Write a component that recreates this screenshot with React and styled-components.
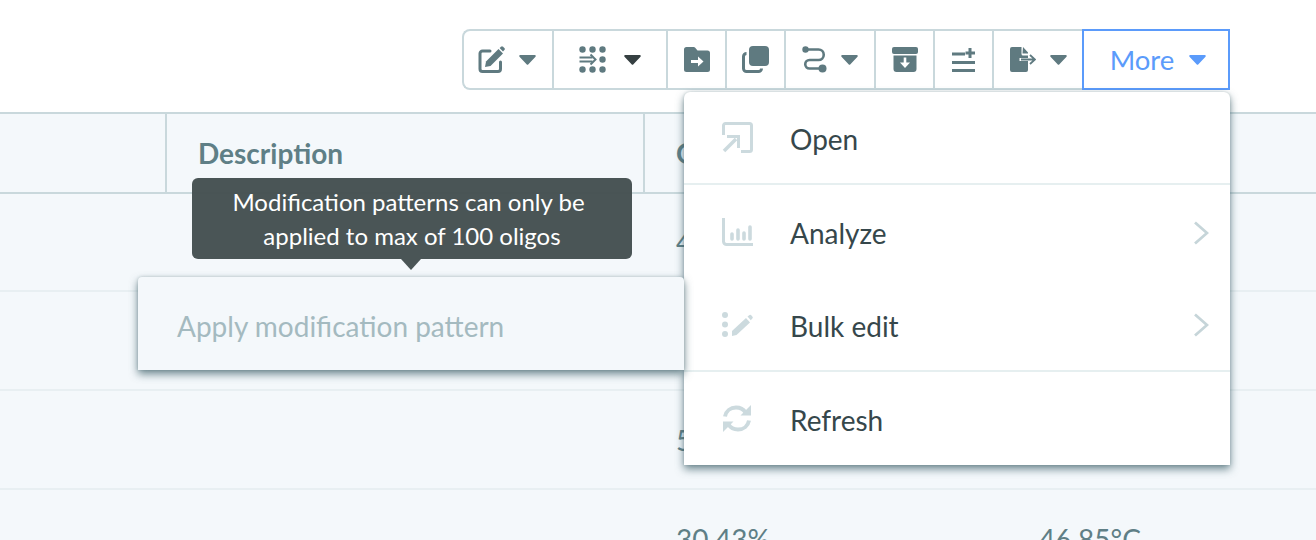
import React from "react";
import styled, { createGlobalStyle } from "styled-components";

const Global = createGlobalStyle`
  html, body { margin: 0; padding: 0; background: #f4f8fb; overflow: hidden; }
  body { font-family: Lato, "Noto Sans", sans-serif; }
  * { box-sizing: border-box; }
`;

const Page = styled.div`
  position: relative;
  width: 1316px;
  height: 540px;
  overflow: hidden;
  background: #f4f8fb;
`;

const TopBar = styled.div`
  height: 114px;
  background: #fff;
  border-bottom: 2px solid #c9d8dc;
  padding: 29px 86px 0 0;
  display: flex;
  justify-content: flex-end;
  align-items: flex-start;
`;

const Toolbar = styled.div`
  display: flex;
  height: 61px;
  border: 2px solid #c9d8dc;
  border-right: none;
  border-radius: 8px 0 0 8px;
`;

const ToolButton = styled.div`
  width: ${p => p.$w}px;
  display: flex;
  align-items: center;
  justify-content: center;
  gap: ${p => p.$gap ?? 14}px;
  border-right: 2px solid #c9d8dc;
  padding-right: ${p => p.$pr ?? 0}px;
`;

const MoreButton = styled.div`
  width: 148px;
  height: 61px;
  margin-left: -2px;
  padding-left: 4px;
  border: 2px solid #5b9bfb;
  color: #5b9bfb;
  font-size: 27.5px;
  line-height: 1;
  display: flex;
  align-items: center;
  justify-content: center;
  gap: 15px;
`;

const HeaderRow = styled.div`
  display: grid;
  grid-template-columns: 167px 478px 363px 1fr;
  height: 80px;
  border-bottom: 2px solid #c9d8dc;
`;

const HeaderCell = styled.div`
  border-right: ${p => (p.$divider ? "2px solid #c9d8dc" : "none")};
  padding-left: 31px;
  display: flex;
  align-items: center;
  font-size: 28px;
  font-weight: 700;
  color: #5f7f86;
`;

const Row = styled.div`
  display: grid;
  grid-template-columns: 167px 478px 363px 1fr;
  height: ${p => p.$h}px;
  border-bottom: 2px solid #e8eff2;
  align-items: center;
`;

const Cell = styled.div`
  padding-left: 31px;
  font-size: 28px;
  color: #5f7f86;
  white-space: nowrap;
`;

const Tooltip = styled.div`
  position: absolute;
  left: 192px;
  top: 178px;
  width: 440px;
  height: 81px;
  padding-top: 7px;
  background: rgba(68, 80, 81, 0.97);
  border-radius: 6px;
  color: #fff;
  font-size: 24px;
  line-height: 34px;
  text-align: center;
  z-index: 3;
  &::after {
    content: "";
    position: absolute;
    left: 209px;
    top: 81px;
    border-left: 10px solid transparent;
    border-right: 10px solid transparent;
    border-top: 11px solid rgba(68, 80, 81, 0.97);
  }
`;

const TipLine = styled.div`
  padding-right: ${p => p.$pr ?? 0}px;
`;

const ApplyMenu = styled.div`
  position: absolute;
  left: 138px;
  top: 277px;
  width: 546px;
  height: 93px;
  padding: 4px 0 0 39px;
  display: flex;
  align-items: center;
  background: #f4f8fb;
  border-radius: 4px 4px 0 0;
  box-shadow: 0 4px 8px rgba(62, 96, 105, 0.75), 0 0 3px rgba(62, 96, 105, 0.25);
  color: #a4bac0;
  font-size: 28px;
  z-index: 3;
`;

const Menu = styled.div`
  position: absolute;
  left: 684px;
  top: 92px;
  width: 546px;
  height: 373px;
  background: #fff;
  border-radius: 6px 6px 0 0;
  box-shadow: 0 4px 8px rgba(62, 96, 105, 0.75), 0 0 3px rgba(62, 96, 105, 0.25);
  z-index: 2;
`;

const MenuSection = styled.div`
  border-bottom: ${p => (p.$last ? "none" : "2px solid #e6eff0")};
`;

const MenuItem = styled.div`
  height: ${p => p.$h}px;
  display: flex;
  align-items: center;
  padding: 0 21px 0 38px;
  color: #36474b;
  font-size: 28px;
`;

const IconSlot = styled.div`
  width: 68px;
  display: flex;
  align-items: center;
`;

const Label = styled.span`
  flex: 1;
  padding-top: 3px;
`;

const ChevronSvg = styled.svg`
  margin-top: 2px;
`;

const Caret = ({ color = "#5f7a80" }) => (
  <svg width="17" height="10" viewBox="0 0 17 10">
    <path d="M1.200 0h14.600a1 1 0 0 1 .7 1.700L9.200 9.400a1 1 0 0 1-1.400 0L.5 1.700A1 1 0 0 1 1.200 0z" fill={color} />
  </svg>
);

const c = "#5f7a80";
const m = "#ccdade";

const EditIcon = () => (
  <svg width="27" height="27" viewBox="0 0 27 27">
    <path d="M12 5H4.500A2.500 2.500 0 0 0 2 7.500V23a2.500 2.500 0 0 0 2.500 2.500H20a2.500 2.500 0 0 0 2.500-2.500v-7" fill="none" stroke={c} strokeWidth="3" strokeLinecap="round" />
    <path d="M8 15.500 20.500 3l4.500 4.500L12.500 20 7 21z" fill={c} />
    <path d="M21.600 2 23 .7a1.500 1.500 0 0 1 2 0l1.400 1.400a1.500 1.500 0 0 1 0 2L25 5.500z" fill={c} />
  </svg>
);

const ColumnsIcon = () => (
  <svg width="28" height="27" viewBox="0 0 28 27">
    {[3.500, 13.500, 23.500].map(x => <circle key={"a" + x} cx={x} cy="3.500" r="3.200" fill={c} />)}
    {[3.500, 13.500, 23.500].map(x => <circle key={"b" + x} cx={x} cy="23.500" r="3.200" fill={c} />)}
    <circle cx="23.500" cy="13.500" r="3.200" fill={c} />
    <path d="M.500 11.500h13M.500 15.500h13" stroke={c} strokeWidth="1.800" fill="none" />
    <path d="M11.500 8.500 16.500 13.500 11.500 18.500" stroke={c} strokeWidth="2" fill="none" />
  </svg>
);

const FolderIcon = () => (
  <svg width="26" height="25" viewBox="0 0 26 25">
    <path d="M2.500 0h7.200a2 2 0 0 1 1.500.7L13.500 3.500h10A2.500 2.500 0 0 1 26 6v16.500a2.500 2.500 0 0 1-2.500 2.500h-21A2.500 2.500 0 0 1 0 22.500V2.500A2.500 2.500 0 0 1 2.500 0z" fill={c} />
    <path d="M7 14.500h10" stroke="#fff" strokeWidth="3" />
    <path d="m14 9.500 5.500 5-5.500 5z" fill="#fff" />
  </svg>
);

const CopyIcon = () => (
  <svg width="27" height="27" viewBox="0 0 27 27">
    <rect x="7" y="0" width="20" height="20" rx="4" fill={c} />
    <path d="M4.500 7.500A3 3 0 0 0 1.500 10.500V22.500a3 3 0 0 0 3 3H16.500a3 3 0 0 0 3-3" fill="none" stroke={c} strokeWidth="3" />
  </svg>
);

const RouteIcon = () => (
  <svg width="25" height="27" viewBox="0 0 25 27">
    <circle cx="3.500" cy="3.500" r="3.200" fill={c} />
    <circle cx="20.500" cy="22.500" r="4" fill={c} />
    <path d="M4 3.500h12.500a5 5 0 0 1 0 10.500h-9a4.200 4.200 0 0 0 0 8.500H18" fill="none" stroke={c} strokeWidth="2.600" />
  </svg>
);

const ArchiveIcon = () => (
  <svg width="26" height="25" viewBox="0 0 26 25">
    <rect x="0" y="0" width="26" height="7" rx="2" fill={c} />
    <path d="M1.500 8.500h23V22a3 3 0 0 1-3 3h-17a3 3 0 0 1-3-3z" fill={c} />
    <path d="M13 10.500v7" stroke="#fff" strokeWidth="2.600" />
    <path d="m8 15.500 5 5.500 5-5.500z" fill="#fff" />
  </svg>
);

const AddRowsIcon = () => (
  <svg width="23" height="24" viewBox="0 0 23 24">
    <path d="M0 6h13M0 14.500h23M0 22.500h23" stroke={c} strokeWidth="3" />
    <path d="M18 0v10M13.500 5h9.500" stroke={c} strokeWidth="3" />
  </svg>
);

const ExportIcon = () => (
  <svg width="26" height="25" viewBox="0 0 26 25">
    <path d="M2 0h9.500v7a1.500 1.500 0 0 0 1.500 1.500h5V11H9.500v3H18v9a2 2 0 0 1-2 2H2a2 2 0 0 1-2-2V2a2 2 0 0 1 2-2z" fill={c} />
    <path d="M13 0l5 5.500v1h-5.500z" fill={c} />
    <path d="M11 12.500h13.500M20 8l5 4.500-5 4.500" fill="none" stroke={c} strokeWidth="1.800" />
  </svg>
);

const OpenIcon = () => (
  <svg width="31" height="31" viewBox="0 0 31 31">
    <path d="M1.500 13V3.500a2 2 0 0 1 2-2h24a2 2 0 0 1 2 2v24a2 2 0 0 1-2 2H19" fill="none" stroke={m} strokeWidth="3" />
    <path d="M2 29 14 17" stroke={m} strokeWidth="3.500" fill="none" />
    <path d="M5 14.500h11.500V26" stroke={m} strokeWidth="3" fill="none" />
  </svg>
);

const ChartIcon = () => (
  <svg width="31" height="28" viewBox="0 0 31 28">
    <path d="M1.500 0v23.500a3 3 0 0 0 3 3H31" fill="none" stroke={m} strokeWidth="3" />
    <path d="M10 16v5M16 12v9M22 15v6M28 9v12" stroke={m} strokeWidth="3.600" strokeLinecap="round" fill="none" />
  </svg>
);

const BulkEditIcon = () => (
  <svg width="31" height="25" viewBox="0 0 31 25">
    <circle cx="3" cy="3" r="3" fill={m} />
    <circle cx="3" cy="12.500" r="3" fill={m} />
    <circle cx="3" cy="22" r="3" fill={m} />
    <path d="M10 19 24 6l4 4.500L14.500 23 10 24z" fill={m} />
    <path d="m25.500 4.500 2-1.500a1.200 1.200 0 0 1 1.500 0l1.500 1.700a1.200 1.200 0 0 1 0 1.500l-1.700 2z" fill={m} />
  </svg>
);

const RefreshIcon = () => (
  <svg width="30" height="27" viewBox="0 0 30 27">
    <path d="M3 11.500C4 6 8.500 2.500 14 2.500c4 0 7.500 1.800 9.500 5" fill="none" stroke={m} strokeWidth="4" />
    <path d="M29 0v10.500H18.500z" fill={m} />
    <path d="M27 15.500C26 21 21.500 24.500 16 24.500c-4 0-7.500-1.800-9.500-5" fill="none" stroke={m} strokeWidth="4" />
    <path d="M1 27V16.500h10.500z" fill={m} />
  </svg>
);

const Chevron = () => (
  <ChevronSvg width="16" height="24" viewBox="0 0 16 24">
    <path d="m2 1.500 12 10.500L2 22.500" fill="none" stroke="#c6d5d9" strokeWidth="2.800" />
  </ChevronSvg>
);

const rows = [
  { h: 98, a: "42.11%" },
  { h: 99, a: "" },
  { h: 99, a: "52.63%" },
  { h: 99, a: "30.43%", b: "46.85°C" },
];

export default function App() {
  return (
    <Page>
      <Global />
      <TopBar>
        <Toolbar>
          <ToolButton $w={90} $pr={2}><EditIcon /><Caret /></ToolButton>
          <ToolButton $w={114} $gap={17}><ColumnsIcon /><Caret color="#364042" /></ToolButton>
          <ToolButton $w={59}><FolderIcon /></ToolButton>
          <ToolButton $w={59}><CopyIcon /></ToolButton>
          <ToolButton $w={90}><RouteIcon /><Caret /></ToolButton>
          <ToolButton $w={59}><ArchiveIcon /></ToolButton>
          <ToolButton $w={59}><AddRowsIcon /></ToolButton>
          <ToolButton $w={90}><ExportIcon /><Caret /></ToolButton>
        </Toolbar>
        <MoreButton>More <Caret color="#5b9bfb" /></MoreButton>
      </TopBar>
      <HeaderRow>
        <HeaderCell $divider />
        <HeaderCell $divider>Description</HeaderCell>
        <HeaderCell>GC content</HeaderCell>
        <HeaderCell />
      </HeaderRow>
      {rows.map((r, i) => (
        <Row key={i} $h={r.h}>
          <Cell />
          <Cell />
          <Cell>{r.a}</Cell>
          <Cell>{r.b}</Cell>
        </Row>
      ))}
      <Tooltip>
        <TipLine $pr={7}>Modification patterns can only be</TipLine>
        <TipLine>applied to max of 100 oligos</TipLine>
      </Tooltip>
      <ApplyMenu>Apply modification pattern</ApplyMenu>
      <Menu>
        <MenuSection>
          <MenuItem $h={91}><IconSlot><OpenIcon /></IconSlot><Label>Open</Label></MenuItem>
        </MenuSection>
        <MenuSection>
          <MenuItem $h={93}><IconSlot><ChartIcon /></IconSlot><Label>Analyze</Label><Chevron /></MenuItem>
          <MenuItem $h={92}><IconSlot><BulkEditIcon /></IconSlot><Label>Bulk edit</Label><Chevron /></MenuItem>
        </MenuSection>
        <MenuSection $last>
          <MenuItem $h={93}><IconSlot><RefreshIcon /></IconSlot><Label>Refresh</Label></MenuItem>
        </MenuSection>
      </Menu>
    </Page>
  );
}
